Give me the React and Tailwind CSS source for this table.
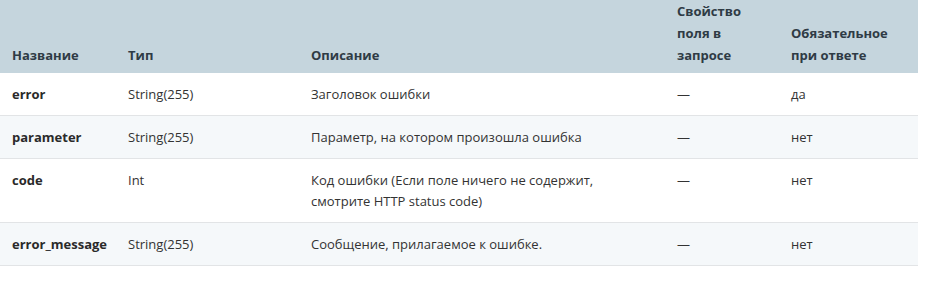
import React from "react";

const rows = [
  { name: "error", type: "String(255)", desc: "Заголовок ошибки", req: "—", resp: "да" },
  { name: "parameter", type: "String(255)", desc: "Параметр, на котором произошла ошибка", req: "—", resp: "нет" },
  { name: "code", type: "Int", desc: "Код ошибки (Если поле ничего не содержит, смотрите HTTP status code)", req: "—", resp: "нет" },
  { name: "error_message", type: "String(255)", desc: "Сообщение, прилагаемое к ошибке.", req: "—", resp: "нет" },
];

export default function App() {
  return (
    <div className="w-[947px] h-[285px] bg-white font-['Open_Sans',sans-serif] text-[13px]">
      <table className="w-[918px] table-fixed border-collapse">
        <colgroup>
          <col className="w-[116px]" />
          <col className="w-[183px]" />
          <col className="w-[366px]" />
          <col className="w-[114px]" />
          <col className="w-[139px]" />
        </colgroup>
        <thead>
          <tr className="bg-[#c5d5dd] text-[#2f3b45] font-bold text-left align-bottom leading-[22px]">
            <th className="px-3 pt-0 pb-[7px]">Название</th>
            <th className="px-3 pt-0 pb-[7px]">Тип</th>
            <th className="px-3 pt-0 pb-[7px]">Описание</th>
            <th className="px-3 pt-0 pb-[7px]">Свойство поля в запросе</th>
            <th className="px-3 pt-0 pb-[7px]">Обязательное при ответе</th>
          </tr>
        </thead>
        <tbody>
          {rows.map((r, i) => (
            <tr
              key={r.name}
              className={`${i % 2 ? "bg-[#f5f8fa]" : "bg-white"} border-b border-[#e2e4e6] align-top leading-[21px] text-[#333333]`}
            >
              <td className="px-3 py-[10.5px] font-bold text-[#2a2a2a]">{r.name}</td>
              <td className="px-3 py-[10.5px]">{r.type}</td>
              <td className="px-3 py-[10.5px]">{r.desc}</td>
              <td className="px-3 py-[10.5px]">{r.req}</td>
              <td className="px-3 py-[10.5px]">{r.resp}</td>
            </tr>
          ))}
        </tbody>
      </table>
    </div>
  );
}
